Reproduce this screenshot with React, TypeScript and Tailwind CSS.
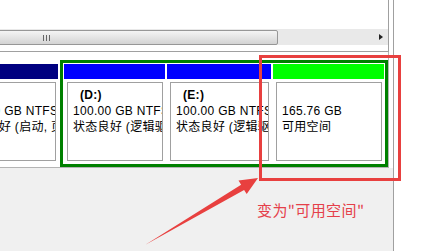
import React from 'react';

type CellProps = {
  header: string;
  className: string;
  children?: React.ReactNode;
};

function Cell({ header, className, children }: CellProps) {
  return (
    <div className={`flex flex-col shrink-0 ${className}`}>
      <div className={`h-[15px] ${header}`} />
      <div className="flex-1 bg-white pt-[3px] pl-[3px] pr-[2px] pb-[2px]">
        <div className="h-full overflow-hidden whitespace-nowrap border border-[#a0a0a0] pl-[5px] pt-[4px] text-[12px] leading-[16px] tracking-[0.3px] text-black">
          {children}
        </div>
      </div>
    </div>
  );
}

function App() {
  return (
    <div className="relative flex h-[251px] w-[423px] overflow-hidden bg-white font-['Liberation_Sans','Noto_Sans_CJK_SC',sans-serif]">
      <div className="flex w-[394px] shrink-0 flex-col border-r border-[#a0a0a0]">
        <div className="flex h-[168px] flex-col bg-white">
          {/* list view with horizontal scrollbar */}
          <div className="flex h-[52px] w-[389px] flex-col border-b border-r border-[#a0a0a0]">
            <div className="h-[29px]" />
            <div className="flex h-[16px] items-center bg-[#e9e9e9]">
              <div className="relative ml-[-6px] h-[15px] w-[284px] rounded-[2px] border border-[#979797] bg-gradient-to-b from-[#f4f4f4] to-[#d4d4d4]">
                <div className="absolute left-[48px] top-[4px] flex gap-[2px]">
                  <div className="h-[6px] w-px bg-[#666]" />
                  <div className="h-[6px] w-px bg-[#666]" />
                  <div className="h-[6px] w-px bg-[#666]" />
                </div>
              </div>
              <div className="flex-1" />
              <div className="mr-[5px] h-0 w-0 border-y-[3.5px] border-l-[4px] border-y-transparent border-l-[#222]" />
            </div>
          </div>
          {/* disk map */}
          <div className="flex h-[116px] w-[389px] items-start overflow-hidden border-b border-r border-[#b4b4b4] pt-[8px]">
            <Cell header="bg-[#000080]" className="ml-[-47px] mt-[4px] h-[99px] w-[105px]">
              <div className="pl-[7px] font-bold">(C:)</div>
              <div>100.00 GB NTFS</div>
              <div>状态良好 (启动, 页面文件, 活动, 故障转储, 主分区)</div>
            </Cell>
            <div className="ml-[2px] flex gap-[2px] border-[3px] border-[#008000] p-[1px]">
              <Cell header="bg-[#0000ff]" className="h-[99px] w-[101px]">
                <div className="pl-[7px] font-bold">(D:)</div>
                <div>100.00 GB NTFS</div>
                <div>状态良好 (逻辑驱动器)</div>
              </Cell>
              <Cell header="bg-[#0000ff]" className="h-[99px] w-[104px]">
                <div className="pl-[7px] font-bold">(E:)</div>
                <div>100.00 GB NTFS</div>
                <div>状态良好 (逻辑驱动器)</div>
              </Cell>
              <Cell header="bg-[#00ff00]" className="h-[99px] w-[111px]">
                <div>&nbsp;</div>
                <div>165.76 GB</div>
                <div>可用空间</div>
              </Cell>
            </div>
          </div>
        </div>
        <div className="flex-1 bg-[#f0f0f0]" />
      </div>
      <div className="flex-1 bg-white" />

      {/* annotation overlay */}
      <div className="absolute left-[259px] top-[55px] h-[126px] w-[142px] border-[3px] border-[#e8403f]" />
      <svg className="absolute left-0 top-0" width="423" height="251" viewBox="0 0 423 251">
        <polygon
          points="258,178 238.5,180.5 241.1,184.7 145,245 244.1,189.9 246.7,194.1"
          fill="#e8403f"
        />
      </svg>
      <div className="absolute left-[257px] top-[200px] text-[15px] leading-[20px] tracking-[0.4px] text-[#e5404a] font-['Noto_Sans_CJK_SC',sans-serif]">
        变为"可用空间"
      </div>
    </div>
  );
}

export default App;
